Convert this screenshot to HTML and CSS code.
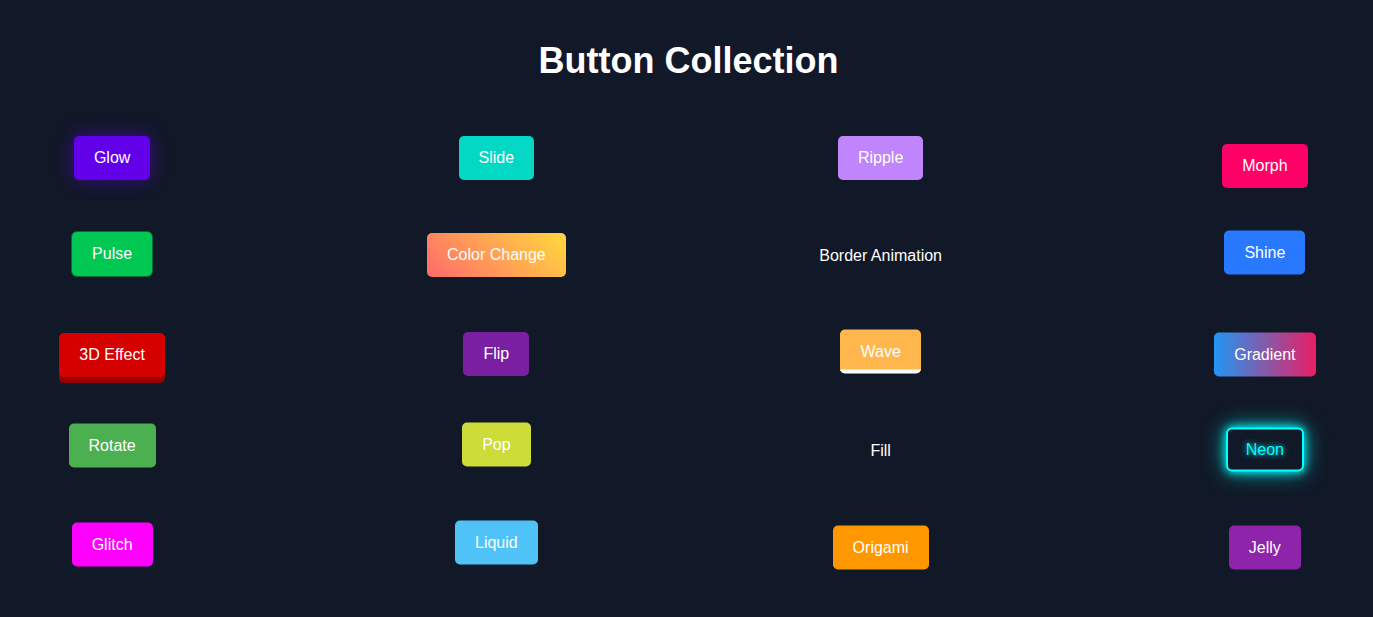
FILE: index.html
```html
<!DOCTYPE html>
<html lang="en">
<head>
<meta charset="utf-8">
<title>Button Collection</title>
<link rel="stylesheet" href="styles.css">
</head>
<body>
<main class="page">
  <h1 class="title">Button Collection</h1>
  <section class="grid">
    <button class="btn glow">Glow</button>
    <button class="btn slide">Slide</button>
    <button class="btn ripple">Ripple</button>
    <button class="btn morph">Morph</button>

    <button class="btn pulse">Pulse</button>
    <button class="btn color-change">Color Change</button>
    <button class="btn border-anim">Border Animation</button>
    <button class="btn shine">Shine</button>

    <button class="btn effect-3d">3D Effect</button>
    <button class="btn flip">Flip</button>
    <button class="btn wave">Wave</button>
    <button class="btn gradient">Gradient</button>

    <button class="btn rotate">Rotate</button>
    <button class="btn pop">Pop</button>
    <button class="btn fill">Fill</button>
    <button class="btn neon">Neon</button>

    <button class="btn glitch">Glitch</button>
    <button class="btn liquid">Liquid</button>
    <button class="btn origami">Origami</button>
    <button class="btn jelly">Jelly</button>
  </section>
</main>
</body>
</html>
```

FILE: styles.css
```css
* {
  box-sizing: border-box;
}

html, body {
  margin: 0;
  padding: 0;
  background: #111827;
}

body {
  font-family: "Liberation Sans", Arial, sans-serif;
  color: #ffffff;
  min-height: 100vh;
}

.page {
  padding: 40px 8px 40px 12px;
}

.title {
  margin: 0 0 54px;
  font-size: 36px;
  font-weight: 700;
  line-height: normal;
  text-align: center;
  color: #ffffff;
}

.grid {
  display: grid;
  grid-template-columns: repeat(4, 1fr);
  grid-auto-rows: 44px;
  column-gap: 184px;
  row-gap: 53px;
  justify-items: center;
  align-items: center;
}

.btn {
  position: relative;
  overflow: hidden;
  border: none;
  border-radius: 5px;
  padding: 12px 20px;
  font-family: inherit;
  font-size: 16px;
  line-height: 20px;
  color: #ffffff;
  background: transparent;
  white-space: nowrap;
  cursor: pointer;
}

.glow {
  background: #6200ea;
  box-shadow: 0 0 18px rgba(98, 0, 234, 0.55);
  overflow: visible;
}

.slide {
  background: #02d8c4;
}

.ripple {
  background: #c084fc;
}

.morph {
  background: #ff0066;
  transform: translateY(8px);
}

.pulse {
  background: #00c853;
  box-shadow: 0 0 0 1px rgba(0, 200, 83, 0.45);
  overflow: visible;
  transform: translateY(-1px);
}

.color-change {
  background: linear-gradient(45deg, #ff6b6b, #ffd93d);
}

.border-anim {
  background: transparent;
  transform: translateY(1px);
}

.shine {
  background: #2979ff;
  transform: translateY(-2.5px);
}

.effect-3d {
  background: #d50000;
  box-shadow: 0 6px 0 #9b0000;
  overflow: visible;
  transform: translateY(3px);
}

.flip {
  background: #7b1fa2;
  transform: translateY(2px);
}

.wave {
  background: #ffb74d;
  transform: translateY(-0.5px);
}

.wave::after {
  content: "";
  position: absolute;
  left: 0;
  right: 0;
  bottom: 0;
  height: 4px;
  background: #ffffff;
}

.gradient {
  background: linear-gradient(90deg, #2196f3, #e91e63);
  transform: translateY(2.5px);
}

.rotate {
  background: #4caf50;
  transform: translateY(-3.5px);
}

.pop {
  background: #cddc39;
  transform: translateY(-4.5px);
}

.fill {
  background: transparent;
  transform: translateY(2px);
}

.neon {
  background: #111827;
  border: 2px solid #00ffff;
  border-radius: 6px;
  padding: 10px 18px;
  color: #00ffff;
  text-shadow: 0 0 6px #00ffff;
  box-shadow: 0 0 10px #00ffff, 0 0 22px rgba(0, 255, 255, 0.7);
  overflow: visible;
  transform: translateY(0.5px);
}

.glitch {
  background: #ff00ff;
  transform: translateY(-1.5px);
}

.liquid {
  background: #4fc3f7;
  transform: translateY(-3.5px);
}

.origami {
  background: #ff9800;
  transform: translateY(1.5px);
}

.jelly {
  background: #8e24aa;
  transform: translateY(1.5px);
}
```
